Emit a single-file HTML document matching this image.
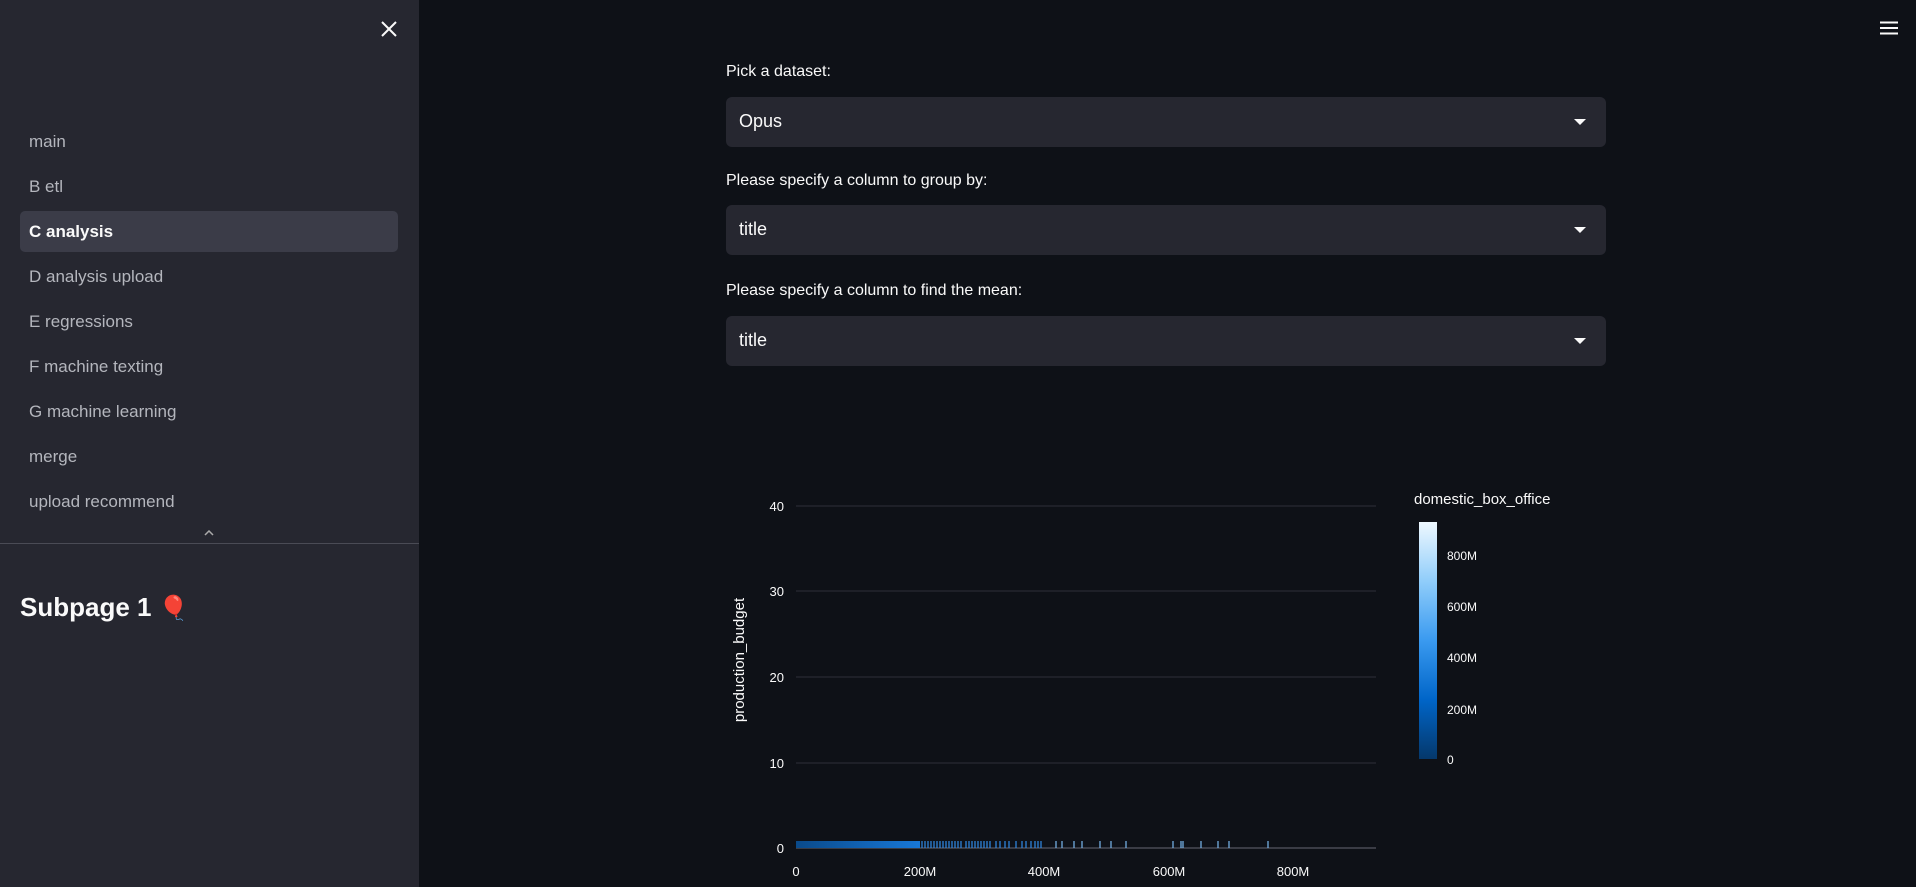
<!DOCTYPE html>
<html><head><meta charset="utf-8"><style>
*{margin:0;padding:0;box-sizing:border-box}
body{width:1916px;height:887px;background:#0e1117;font-family:"Liberation Sans",sans-serif;position:relative;overflow:hidden;color:#fafafa}
.sb{position:absolute;left:0;top:0;width:419px;height:887px;background:#262730}
.nav{position:absolute;left:29px;font-size:17px;color:#b4b6bd}
.hl{position:absolute;left:20px;top:211px;width:378px;height:41px;background:#3b3c48;border-radius:5px}
.lbl{position:absolute;left:726px;font-size:16px;color:#fafafa}
.sel{position:absolute;left:726px;width:880px;height:50px;background:#262730;border-radius:6px}
.sel span{position:absolute;left:13px;top:14px;font-size:18px}
.sel i{position:absolute;right:20px;top:22px;width:0;height:0;border-left:6px solid transparent;border-right:6px solid transparent;border-top:6px solid #fafafa}
</style></head><body>
<div class="sb">
<svg style="position:absolute;left:381px;top:21px" width="16" height="16"><path d="M1 1L15 15M15 1L1 15" stroke="#fafafa" stroke-width="2"/></svg>
<div class="hl"></div>
<div class="nav" style="top:132px">main</div>
<div class="nav" style="top:177px">B etl</div>
<div class="nav" style="top:222px;color:#fafafa;font-weight:bold">C analysis</div>
<div class="nav" style="top:267px">D analysis upload</div>
<div class="nav" style="top:312px">E regressions</div>
<div class="nav" style="top:357px">F machine texting</div>
<div class="nav" style="top:402px">G machine learning</div>
<div class="nav" style="top:447px">merge</div>
<div class="nav" style="top:492px">upload recommend</div>
<svg style="position:absolute;left:204px;top:530px" width="10" height="6"><path d="M1 5L5 1L9 5" stroke="#aaa" fill="none" stroke-width="1.5"/></svg>
<div style="position:absolute;left:0;top:543px;width:419px;height:1px;background:#4a4b55"></div>
<div style="position:absolute;left:20px;top:592px;font-size:26px;font-weight:bold">Subpage 1 <span style="font-size:24px">🎈</span></div>
</div>
<svg style="position:absolute;left:1880px;top:21px" width="18" height="14"><path d="M0 1.5H18M0 7H18M0 12.5H18" stroke="#fafafa" stroke-width="2"/></svg>
<div class="lbl" style="top:63px">Pick a dataset:</div>
<div class="sel" style="top:97px"><span>Opus</span><i></i></div>
<div class="lbl" style="top:172px">Please specify a column to group by:</div>
<div class="sel" style="top:205px"><span>title</span><i></i></div>
<div class="lbl" style="top:282px">Please specify a column to find the mean:</div>
<div class="sel" style="top:316px"><span>title</span><i></i></div>
<svg style="position:absolute;left:0;top:0" width="1916" height="887" font-family="Liberation Sans,sans-serif">
<defs>
<linearGradient id="cb" x1="0" y1="1" x2="0" y2="0"><stop offset="0" stop-color="#05386b"/><stop offset="0.25" stop-color="#0065c8"/><stop offset="0.5" stop-color="#3a9af0"/><stop offset="0.75" stop-color="#90cdfa"/><stop offset="1" stop-color="#eef8ff"/></linearGradient>
<linearGradient id="rg" x1="0" x2="1"><stop offset="0" stop-color="#0a4a8a"/><stop offset="1" stop-color="#1878d8"/></linearGradient>
</defs>
<g stroke="#2e3038" stroke-width="1">
<line x1="796" y1="506" x2="1376" y2="506"/><line x1="796" y1="591" x2="1376" y2="591"/><line x1="796" y1="677" x2="1376" y2="677"/><line x1="796" y1="763" x2="1376" y2="763"/>
</g>
<line x1="796" y1="848" x2="1376" y2="848" stroke="#3a3c45" stroke-width="2"/>
<g fill="#fafafa" font-size="13" text-anchor="end">
<text x="784" y="511">40</text><text x="784" y="596">30</text><text x="784" y="682">20</text><text x="784" y="768">10</text><text x="784" y="853">0</text>
</g>
<g fill="#fafafa" font-size="13" text-anchor="middle">
<text x="796" y="876">0</text><text x="920" y="876">200M</text><text x="1044" y="876">400M</text><text x="1169" y="876">600M</text><text x="1293" y="876">800M</text>
</g>
<text transform="translate(744,660) rotate(-90)" fill="#fafafa" font-size="15" text-anchor="middle">production_budget</text>
<rect x="796" y="841" width="124" height="7" fill="url(#rg)"/>
<g stroke="#2f8ae8" stroke-width="1.2">
<path d="M922 841v7M925 841v7M928 841v7M931 841v7M934 841v7M937 841v7M940 841v7M943 841v7M946 841v7M949 841v7M952 841v7M955 841v7M958 841v7M961 841v7M966 841v7M969 841v7M972 841v7M975 841v7M978 841v7M981 841v7M984 841v7M987 841v7M990 841v7M996 841v7M1000 841v7M1005 841v7M1009 841v7M1016 841v7M1022 841v7M1026 841v7M1031 841v7M1035 841v7M1038 841v7M1041 841v7"/>
</g>
<g stroke="#7ab8f0" stroke-width="1.2">
<path d="M1056 841v7M1062 841v7M1074 841v7M1082 841v7M1100 841v7M1111 841v7M1126 841v7M1173 841v7M1181 841v7M1183 841v7M1201 841v7M1218 841v7M1229 841v7M1268 841v7"/>
</g>
<text x="1414" y="504" fill="#fafafa" font-size="15">domestic_box_office</text>
<rect x="1419" y="522" width="18" height="237" fill="url(#cb)"/>
<g fill="#fafafa" font-size="12">
<text x="1447" y="560">800M</text><text x="1447" y="611">600M</text><text x="1447" y="662">400M</text><text x="1447" y="714">200M</text><text x="1447" y="764">0</text>
</g>
</svg>
</body></html>
